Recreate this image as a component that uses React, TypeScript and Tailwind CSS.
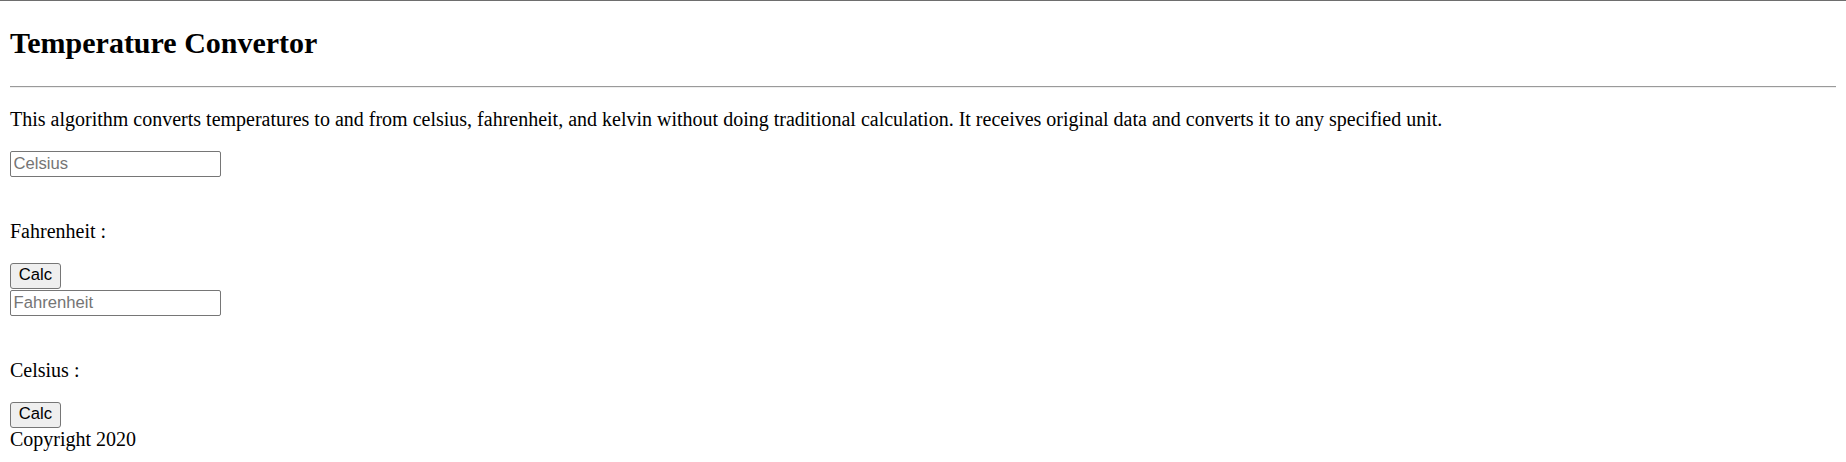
import React from "react";

export default function App() {
  const serif = "font-['Liberation_Serif','Times_New_Roman',serif]";
  const sans = "font-['Liberation_Sans',Arial,sans-serif]";
  return (
    <div className={`min-h-[462px] w-full border-t border-[#6e6e6e] bg-white px-[10px] text-black ${serif}`}>
      <h2 className="mt-[25px] mb-[25px] text-[30px] font-bold leading-[34.5px]">Temperature Convertor</h2>
      <hr className="h-[2px] border-0 border-t border-b border-t-[#9a9a9a] border-b-[#eeeeee]" />
      <p className="mt-[20px] mb-[20px] text-[20px] leading-[23px]">
        This algorithm converts temperatures to and from celsius, fahrenheit, and kelvin without doing traditional calculation. It receives original data and converts it to any specified unit.
      </p>
      <div className="flex flex-col items-start">
        <input
          type="text"
          placeholder="Celsius"
          className={`block h-[26px] w-[211px] rounded-[2px] border border-[#767676] bg-white px-[2.5px] py-0 text-[16.67px] text-black outline-none placeholder:text-[#757575] ${sans}`}
        />
        <p className="mt-[43px] mb-[20px] text-[20px] leading-[23px]">Fahrenheit :</p>
        <button
          type="button"
          className={`flex h-[26px] w-[51px] items-center justify-center rounded-[3px] border border-[#767676] bg-[#efefef] p-0 text-[16.67px] leading-none text-black ${sans}`}
        >
          Calc
        </button>
        <input
          type="text"
          placeholder="Fahrenheit"
          className={`mt-[1px] block h-[26px] w-[211px] rounded-[2px] border border-[#767676] bg-white px-[2.5px] py-0 text-[16.67px] text-black outline-none placeholder:text-[#757575] ${sans}`}
        />
        <p className="mt-[43px] mb-[20px] text-[20px] leading-[23px]">Celsius :</p>
        <button
          type="button"
          className={`flex h-[26px] w-[51px] items-center justify-center rounded-[3px] border border-[#767676] bg-[#efefef] p-0 text-[16.67px] leading-none text-black ${sans}`}
        >
          Calc
        </button>
        <div className="text-[20px] leading-[23px]">Copyright 2020</div>
      </div>
    </div>
  );
}
